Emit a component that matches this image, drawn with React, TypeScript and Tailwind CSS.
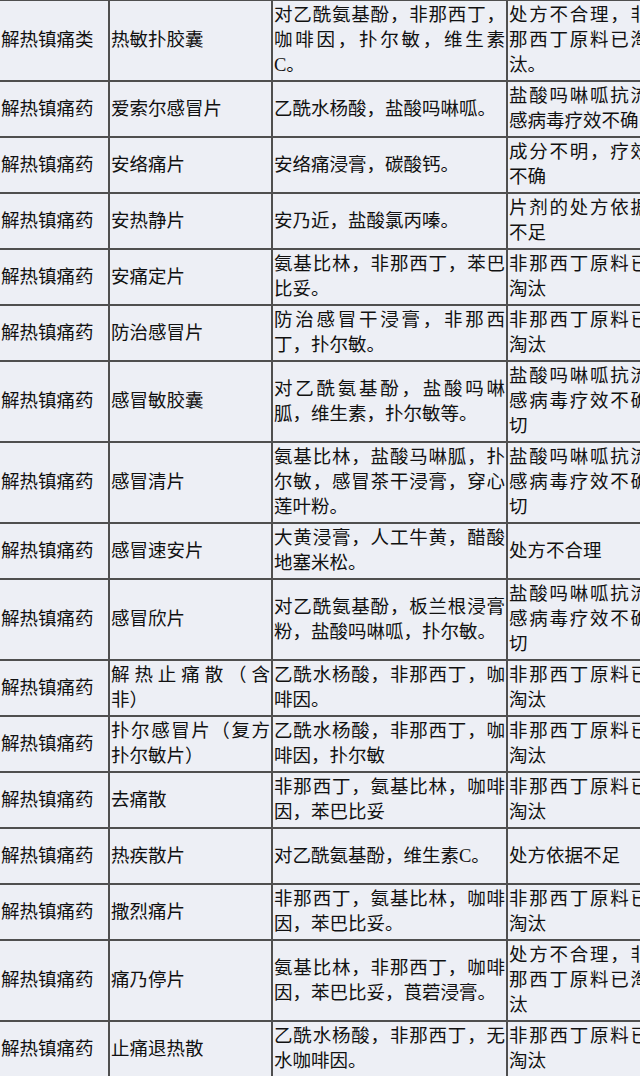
import React from 'react';

type Row = [string, string, string, string];

const rows: Row[] = [
  ['解热镇痛类', '热敏扑胶囊', '对乙酰氨基酚，非那西丁，咖啡因，扑尔敏，维生素C。', '处方不合理，非那西丁原料已淘汰。'],
  ['解热镇痛药', '爱索尔感冒片', '乙酰水杨酸，盐酸吗啉呱。', '盐酸吗啉呱抗流感病毒疗效不确'],
  ['解热镇痛药', '安络痛片', '安络痛浸膏，碳酸钙。', '成分不明，疗效不确'],
  ['解热镇痛药', '安热静片', '安乃近，盐酸氯丙嗪。', '片剂的处方依据不足'],
  ['解热镇痛药', '安痛定片', '氨基比林，非那西丁，苯巴比妥。', '非那西丁原料已淘汰'],
  ['解热镇痛药', '防治感冒片', '防治感冒干浸膏，非那西丁，扑尔敏。', '非那西丁原料已淘汰'],
  ['解热镇痛药', '感冒敏胶囊', '对乙酰氨基酚，盐酸吗啉胍，维生素，扑尔敏等。', '盐酸吗啉呱抗流感病毒疗效不确切'],
  ['解热镇痛药', '感冒清片', '氨基比林，盐酸马啉胍，扑尔敏，感冒茶干浸膏，穿心莲叶粉。', '盐酸吗啉呱抗流感病毒疗效不确切'],
  ['解热镇痛药', '感冒速安片', '大黄浸膏，人工牛黄，醋酸地塞米松。', '处方不合理'],
  ['解热镇痛药', '感冒欣片', '对乙酰氨基酚，板兰根浸膏粉，盐酸吗啉呱，扑尔敏。', '盐酸吗啉呱抗流感病毒疗效不确切'],
  ['解热镇痛药', '解热止痛散（含非）', '乙酰水杨酸，非那西丁，咖啡因。', '非那西丁原料已淘汰'],
  ['解热镇痛药', '扑尔感冒片（复方扑尔敏片）', '乙酰水杨酸，非那西丁，咖啡因，扑尔敏', '非那西丁原料已淘汰'],
  ['解热镇痛药', '去痛散', '非那西丁，氨基比林，咖啡因，苯巴比妥', '非那西丁原料已淘汰'],
  ['解热镇痛药', '热疾散片', '对乙酰氨基酚，维生素C。', '处方依据不足'],
  ['解热镇痛药', '撒烈痛片', '非那西丁，氨基比林，咖啡因，苯巴比妥。', '非那西丁原料已淘汰'],
  ['解热镇痛药', '痛乃停片', '氨基比林，非那西丁，咖啡因，苯巴比妥，莨菪浸膏。', '处方不合理，非那西丁原料已淘汰'],
  ['解热镇痛药', '止痛退热散', '乙酰水杨酸，非那西丁，无水咖啡因。', '非那西丁原料已淘汰'],
];

const Cell: React.FC<{ text: string }> = ({ text }) => (
  <div className="flex min-h-[54px] items-center bg-[#edeff5] px-[1px] py-[2px]">
    <p className="w-full text-justify [text-spacing-trim:space-all]">{text}</p>
  </div>
);

const App: React.FC = () => {
  return (
    <div className="h-[1076px] w-[640px] overflow-hidden bg-[#edeff5]">
      <div
        className="grid w-[652px] grid-cols-[108px_161px_233px_142px] gap-[2px] bg-[#4f4f4f] pt-[1px] pb-[2px] text-[18.5px] leading-[25px] text-[#111]"
        style={{ fontFamily: '"Liberation Serif", "Noto Sans CJK SC", serif' }}
      >
        {rows.map((r, i) => (
          <React.Fragment key={i}>
            {r.map((t, j) => (
              <Cell key={j} text={t} />
            ))}
          </React.Fragment>
        ))}
      </div>
    </div>
  );
};

export default App;
